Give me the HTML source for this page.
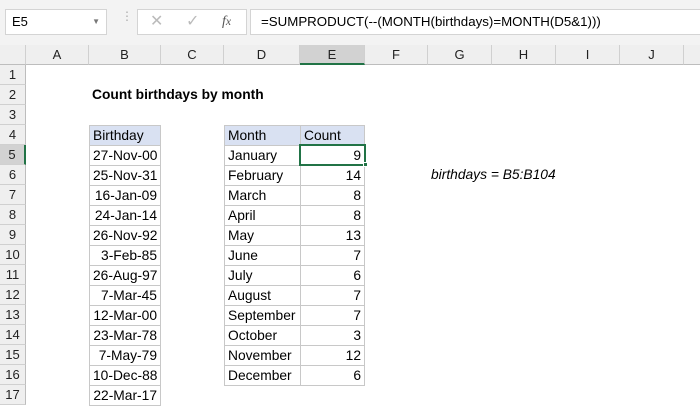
<!DOCTYPE html>
<html><head><style>
*{margin:0;padding:0;box-sizing:border-box}
body{width:700px;height:400px;overflow:hidden;background:#fff;font-family:"Liberation Sans",sans-serif;position:relative}
.a{position:absolute}
.top{left:0;top:0;width:700px;height:45px;background:#f3f3f3}
.box{background:#fff;border:1px solid #d4d4d4}
.ch{top:45px;height:20px;background:#efefef;border-right:1px solid #d0d0d0;border-bottom:1px solid #bdbdbd;font-size:13px;text-align:center;line-height:19px;color:#222}
.rh{left:0;width:26px;height:20px;background:#efefef;border-right:1px solid #bdbdbd;border-bottom:1px solid #d0d0d0;font-size:13px;text-align:center;line-height:20px;color:#222}
.c{height:21px;border:1px solid #c8c8c8;font-size:13.8px;line-height:19px;padding:0 3px;color:#000;white-space:nowrap}
.r{text-align:right}
.hd{background:#d9e1f2}
</style></head><body>
<div class="a top"></div>
<div class="a box" style="left:5px;top:9px;width:102px;height:26px;font-size:13px;line-height:24px;padding-left:6px">E5<span style="position:absolute;right:6px;top:0;font-size:8px;color:#777">▼</span></div>
<div class="a" style="left:121px;top:14px;color:#aaa;font-size:12px;line-height:5px">⋮</div>
<div class="a box" style="left:137px;top:9px;width:110px;height:26px;color:#bbb;font-size:16px;line-height:24px"><span style="position:absolute;left:12px">✕</span><span style="position:absolute;left:48px">✓</span><span style="position:absolute;left:84px;color:#555;font-family:'Liberation Serif',serif;font-style:italic;font-size:14px">f<small>x</small></span></div>
<div class="a box" style="left:250px;top:9px;width:460px;height:26px;font-size:13.3px;line-height:24px;padding-left:10px">=SUMPRODUCT(--(MONTH(birthdays)=MONTH(D5&amp;1)))</div>
<div class="a ch" style="left:0;width:26px"></div>
<div class="a ch" style="left:26px;width:63px">A</div>
<div class="a ch" style="left:89px;width:72px">B</div>
<div class="a ch" style="left:161px;width:63px">C</div>
<div class="a ch" style="left:224px;width:76px">D</div>
<div class="a ch" style="left:300px;width:65px;background:#d2d2d2;border-bottom:2px solid #217346">E</div>
<div class="a ch" style="left:365px;width:63px">F</div>
<div class="a ch" style="left:428px;width:64px">G</div>
<div class="a ch" style="left:492px;width:64px">H</div>
<div class="a ch" style="left:556px;width:64px">I</div>
<div class="a ch" style="left:620px;width:64px">J</div>
<div class="a ch" style="left:684px;width:30px"></div>
<div class="a rh" style="top:65px">1</div><div class="a rh" style="top:85px">2</div><div class="a rh" style="top:105px">3</div><div class="a rh" style="top:125px">4</div><div class="a rh" style="top:145px;background:#d2d2d2;border-right:2px solid #217346">5</div><div class="a rh" style="top:165px">6</div><div class="a rh" style="top:185px">7</div><div class="a rh" style="top:205px">8</div><div class="a rh" style="top:225px">9</div><div class="a rh" style="top:245px">10</div><div class="a rh" style="top:265px">11</div><div class="a rh" style="top:285px">12</div><div class="a rh" style="top:305px">13</div><div class="a rh" style="top:325px">14</div><div class="a rh" style="top:345px">15</div><div class="a rh" style="top:365px">16</div><div class="a rh" style="top:385px">17</div>
<div class="a" style="left:92px;top:87px;font-size:13.8px;font-weight:bold">Count birthdays by month</div>
<div class="a" style="left:431px;top:167px;font-size:13.8px;font-style:italic">birthdays = B5:B104</div>
<div class="a" style="left:89px;top:125px;width:72px">
<div class="c hd">Birthday</div>
<div class="c r" style="margin-top:-1px">27-Nov-00</div><div class="c r" style="margin-top:-1px">25-Nov-31</div><div class="c r" style="margin-top:-1px">16-Jan-09</div><div class="c r" style="margin-top:-1px">24-Jan-14</div><div class="c r" style="margin-top:-1px">26-Nov-92</div><div class="c r" style="margin-top:-1px">3-Feb-85</div><div class="c r" style="margin-top:-1px">26-Aug-97</div><div class="c r" style="margin-top:-1px">7-Mar-45</div><div class="c r" style="margin-top:-1px">12-Mar-00</div><div class="c r" style="margin-top:-1px">23-Mar-78</div><div class="c r" style="margin-top:-1px">7-May-79</div><div class="c r" style="margin-top:-1px">10-Dec-88</div><div class="c r" style="margin-top:-1px">22-Mar-17</div>
</div>
<div class="a" style="left:224px;top:125px;width:77px">
<div class="c hd">Month</div>
<div class="c" style="margin-top:-1px">January</div><div class="c" style="margin-top:-1px">February</div><div class="c" style="margin-top:-1px">March</div><div class="c" style="margin-top:-1px">April</div><div class="c" style="margin-top:-1px">May</div><div class="c" style="margin-top:-1px">June</div><div class="c" style="margin-top:-1px">July</div><div class="c" style="margin-top:-1px">August</div><div class="c" style="margin-top:-1px">September</div><div class="c" style="margin-top:-1px">October</div><div class="c" style="margin-top:-1px">November</div><div class="c" style="margin-top:-1px">December</div>
</div>
<div class="a" style="left:300px;top:125px;width:65px">
<div class="c hd">Count</div>
<div class="c r" style="margin-top:-1px">9</div><div class="c r" style="margin-top:-1px">14</div><div class="c r" style="margin-top:-1px">8</div><div class="c r" style="margin-top:-1px">8</div><div class="c r" style="margin-top:-1px">13</div><div class="c r" style="margin-top:-1px">7</div><div class="c r" style="margin-top:-1px">6</div><div class="c r" style="margin-top:-1px">7</div><div class="c r" style="margin-top:-1px">7</div><div class="c r" style="margin-top:-1px">3</div><div class="c r" style="margin-top:-1px">12</div><div class="c r" style="margin-top:-1px">6</div>
</div>
<div class="a" style="left:299px;top:144px;width:67px;height:22px;border:2px solid #217346"></div>
<div class="a" style="left:363px;top:162px;width:5px;height:5px;background:#217346;border:1px solid #fff"></div>
</body></html>
